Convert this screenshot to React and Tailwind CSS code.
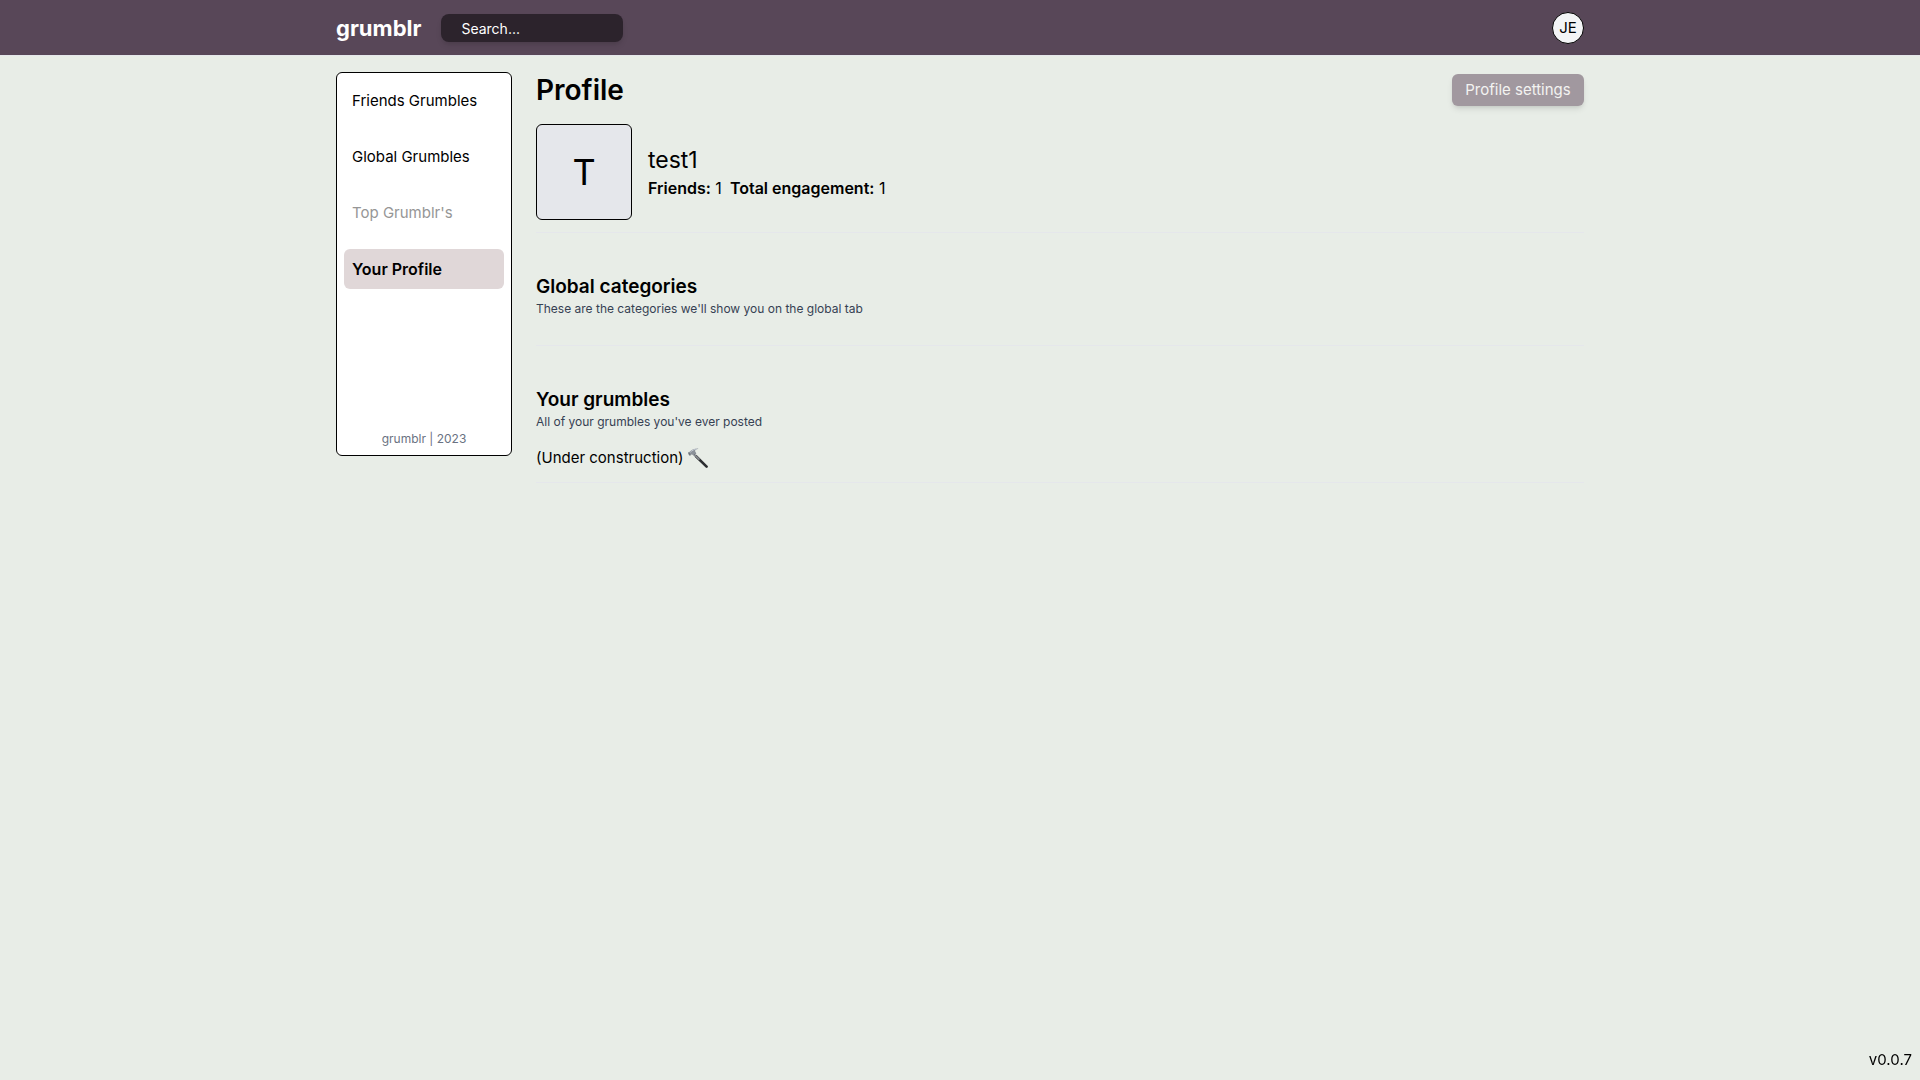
const navItems = [
  { label: "Friends Grumbles" },
  { label: "Global Grumbles" },
  { label: "Top Grumblr's", disabled: true },
  { label: "Your Profile", active: true },
];

function NavItem({ label, active, disabled }) {
  if (disabled) {
    return (
      <button type="button" disabled className="flex h-10 items-center rounded-md px-2 text-left text-[#969696]">
        {label}
      </button>
    );
  }
  return (
    <a
      href="#"
      aria-current={active ? "page" : undefined}
      className={
        active
          ? "flex h-10 items-center rounded-md bg-[#e0d7d8] px-2 text-base font-semibold"
          : "flex h-10 items-center rounded-md px-2"
      }
    >
      {label}
    </a>
  );
}

function Hammer() {
  return (
    <svg viewBox="0 0 20 20" className="h-5 w-5" aria-label="hammer" role="img">
      <path d="M8 8.2 18.6 18.6" stroke="#2c2e31" strokeWidth="2.6" strokeLinecap="round" />
      <path d="M6.3 6.6 11.5 11.7" stroke="#85898f" strokeWidth="1.8" />
      <path
        d="M.5 4.4 2 3.6C3.7 1.7 6.2.5 9.9.5c.4 0 .4.5 0 .6-1.7.3-2.6.9-2.9 1.8l1.1 2.2-2.2 2.5-2-1.1-1.2.3-.9 1.1L.2 6.1z"
        fill="#8b9199"
      />
      <path d="M2.4 4.3C4 2.5 6 1.3 8.8.9" stroke="#cfd6df" strokeWidth=".8" fill="none" />
      <path d="m.5 4.5 1.8 2.8M5.9 7.4l2-2.1" stroke="#555a61" strokeWidth=".7" />
    </svg>
  );
}

function Section({ title, subtitle, children }) {
  return (
    <section className="border-b border-gray-200 pt-10 pb-3">
      <h2 className="text-[19px] leading-7 font-semibold">{title}</h2>
      <p className="text-xs text-gray-700">{subtitle}</p>
      <div className="mt-4">{children}</div>
    </section>
  );
}

export default function App() {
  return (
    <div className="min-h-screen bg-[#e8ede7] font-['Inter','Liberation_Sans',sans-serif] text-[15px] leading-6 text-black">
      <header className="h-14 border-b border-gray-200 bg-[#584758] pt-3">
        <div className="mx-auto flex h-8 w-full max-w-[1248px] items-center justify-between">
          <div className="flex items-center gap-5">
            <a href="#" className="text-[22px] leading-8 font-bold text-white">
              grumblr
            </a>
            <input
              type="search"
              aria-label="Search"
              placeholder="Search..."
              className="h-7 w-[182px] rounded-lg bg-[#2c232c] px-5 text-sm text-white shadow-md placeholder:text-white"
            />
          </div>
          <button
            type="button"
            aria-label="Account"
            className="flex size-8 items-center justify-center rounded-full border border-black bg-gray-100"
          >
            JE
          </button>
        </div>
      </header>

      <div className="mx-auto flex w-full max-w-[1248px] items-start gap-6 pt-4">
        <aside className="flex h-96 w-44 shrink-0 flex-col justify-between rounded-md border border-black bg-white px-[7px] py-2">
          <nav className="flex flex-col gap-4">
            {navItems.map((item) => (
              <NavItem key={item.label} {...item} />
            ))}
          </nav>
          <p className="text-center text-xs text-gray-500">grumblr | 2023</p>
        </aside>

        <main className="min-w-0 flex-1">
          <div className="flex items-center justify-between">
            <h1 className="text-[28px] leading-9 font-semibold">Profile</h1>
            <button
              type="button"
              className="h-8 min-w-[132px] rounded-md bg-[#a1989f] px-3 text-[#f3f3f1] shadow-md"
            >
              Profile settings
            </button>
          </div>

          <div className="mt-4 flex items-center gap-4 border-b border-gray-200 pb-3">
            <div className="flex size-24 items-center justify-center rounded-md border border-black bg-gray-200 text-4xl">
              T
            </div>
            <div>
              <p className="text-[23px] leading-8">test1</p>
              <div className="flex gap-2 text-base">
                <p>
                  <span className="font-semibold">Friends:</span> 1
                </p>
                <p>
                  <span className="font-semibold">Total engagement:</span> 1
                </p>
              </div>
            </div>
          </div>

          <Section title="Global categories" subtitle="These are the categories we'll show you on the global tab" />
          <Section title="Your grumbles" subtitle="All of your grumbles you've ever posted">
            <p className="flex items-center gap-1">
              (Under construction) <Hammer />
            </p>
          </Section>
        </main>
      </div>

      <p className="fixed right-2 bottom-2">v0.0.7</p>
    </div>
  );
}
